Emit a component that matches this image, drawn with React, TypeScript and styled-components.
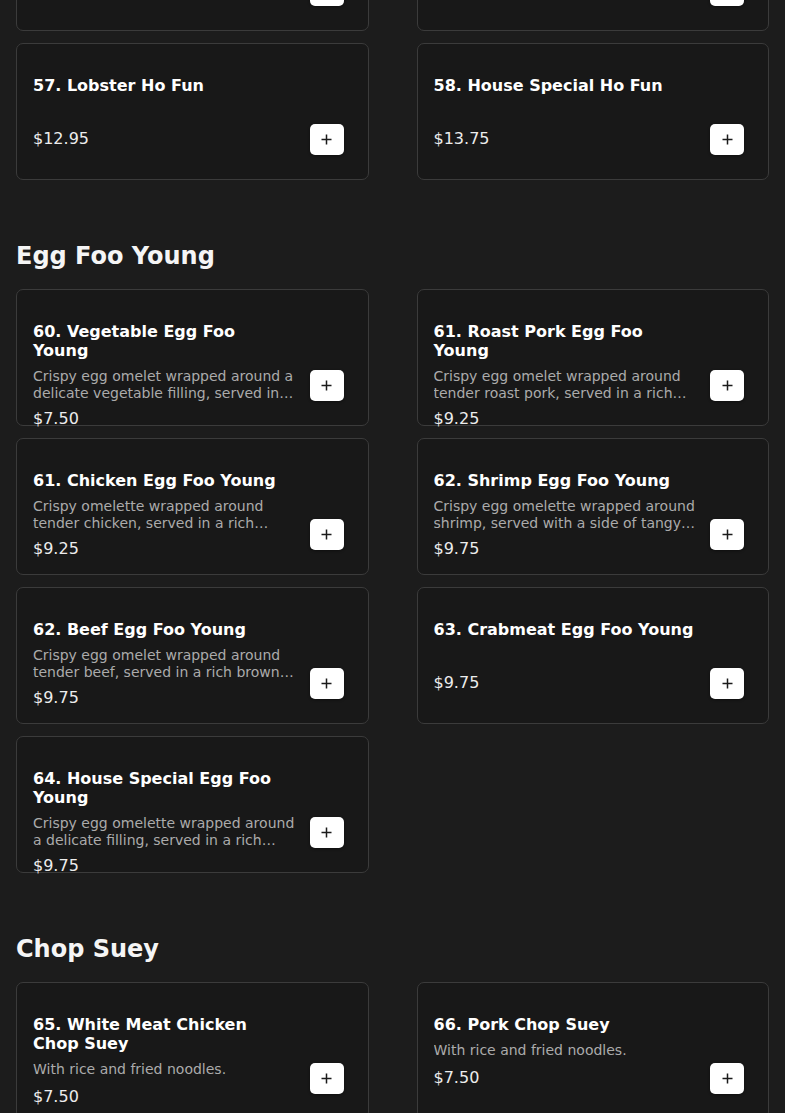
import React from "react";
import styled, { createGlobalStyle } from "styled-components";

const GlobalStyle = createGlobalStyle`
  html, body {
    margin: 0;
    padding: 0;
    background: #1c1c1c;
  }
  body {
    font-family: "DejaVu Sans", "Liberation Sans", sans-serif;
    color: #ffffff;
  }
`;

const Viewport = styled.div`
  height: 1113px;
  overflow: hidden;
`;

// the page is shown scrolled part way down the menu
const Scroller = styled.div`
  margin-top: -106px;
  padding: 0 16px 40px;
`;

const Section = styled.section`
  & + & {
    margin-top: 60px;
  }
`;

const SectionTitle = styled.h2`
  margin: 0 0 17px;
  font-size: 24px;
  line-height: 32px;
  font-weight: 700;
  color: #f5f5f5;
`;

const Grid = styled.div`
  display: grid;
  grid-template-columns: 1fr 1fr;
  column-gap: 48px;
  row-gap: 12px;
`;

const Card = styled.div`
  height: 137px;
  box-sizing: border-box;
  display: flex;
  align-items: flex-start;
  gap: 14px;
  padding: 0 24px 0 16px;
  background: #181818;
  border: 1px solid #3b3b3b;
  border-radius: 7px;
`;

const Info = styled.div`
  flex: 1;
  min-width: 0;
  padding-top: 32px;
`;

const ItemName = styled.h3`
  margin: 0;
  font-size: 16px;
  line-height: 19px;
  font-weight: 700;
  color: #ffffff;
`;

const Desc = styled.p`
  margin: 8px 0 0;
  min-height: 19px;
  font-size: 14px;
  line-height: 17px;
  color: #ababab;
  display: -webkit-box;
  -webkit-line-clamp: 2;
  -webkit-box-orient: vertical;
  overflow: hidden;
`;

const Price = styled.div`
  margin-top: 7px;
  font-size: 16px;
  line-height: 19px;
  color: #ececec;
`;

const AddButton = styled.button`
  flex: none;
  margin-top: 80px;
  width: 34px;
  height: 31px;
  display: flex;
  align-items: center;
  justify-content: center;
  padding: 0;
  border: none;
  border-radius: 5px;
  background: #ffffff;
  box-shadow: 0 1px 3px rgba(0, 0, 0, 0.4);
  cursor: pointer;
`;

const PlusIcon = () => (
  <svg width="11" height="11" viewBox="0 0 11 11">
    <path d="M5.5 0.5v10M0.5 5.5h10" stroke="#1b1b1b" strokeWidth="1.5" />
  </svg>
);

type Item = { name: string; desc?: string; price: string };

const sections: { title?: string; items: Item[] }[] = [
  {
    items: [
      { name: "55. Shrimp Ho Fun", price: "$12.50" },
      { name: "56. Beef Ho Fun", price: "$12.50" },
      { name: "57. Lobster Ho Fun", price: "$12.95" },
      { name: "58. House Special Ho Fun", price: "$13.75" },
    ],
  },
  {
    title: "Egg Foo Young",
    items: [
      {
        name: "60. Vegetable Egg Foo Young",
        desc: "Crispy egg omelet wrapped around a delicate vegetable filling, served in a rich brown gravy.",
        price: "$7.50",
      },
      {
        name: "61. Roast Pork Egg Foo Young",
        desc: "Crispy egg omelet wrapped around tender roast pork, served in a rich brown gravy.",
        price: "$9.25",
      },
      {
        name: "61. Chicken Egg Foo Young",
        desc: "Crispy omelette wrapped around tender chicken, served in a rich brown gravy.",
        price: "$9.25",
      },
      {
        name: "62. Shrimp Egg Foo Young",
        desc: "Crispy egg omelette wrapped around shrimp, served with a side of tangy brown gravy.",
        price: "$9.75",
      },
      {
        name: "62. Beef Egg Foo Young",
        desc: "Crispy egg omelet wrapped around tender beef, served in a rich brown gravy.",
        price: "$9.75",
      },
      { name: "63. Crabmeat Egg Foo Young", price: "$9.75" },
      {
        name: "64. House Special Egg Foo Young",
        desc: "Crispy egg omelette wrapped around a delicate filling, served in a rich brown gravy.",
        price: "$9.75",
      },
    ],
  },
  {
    title: "Chop Suey",
    items: [
      { name: "65. White Meat Chicken Chop Suey", desc: "With rice and fried noodles.", price: "$7.50" },
      { name: "66. Pork Chop Suey", desc: "With rice and fried noodles.", price: "$7.50" },
      { name: "67. Shrimp Chop Suey", desc: "With rice and fried noodles.", price: "$8.25" },
      { name: "68. Beef Chop Suey", desc: "With rice and fried noodles.", price: "$8.25" },
    ],
  },
];

const MenuCard = ({ item }: { item: Item }) => (
  <Card>
    <Info>
      <ItemName>{item.name}</ItemName>
      <Desc>{item.desc}</Desc>
      <Price>{item.price}</Price>
    </Info>
    <AddButton aria-label={`Add ${item.name}`}>
      <PlusIcon />
    </AddButton>
  </Card>
);

export default function App() {
  return (
    <>
      <GlobalStyle />
      <Viewport>
        <Scroller>
          {sections.map((s, i) => (
            <Section key={i}>
              {s.title && <SectionTitle>{s.title}</SectionTitle>}
              <Grid>
                {s.items.map((item) => (
                  <MenuCard key={item.name} item={item} />
                ))}
              </Grid>
            </Section>
          ))}
        </Scroller>
      </Viewport>
    </>
  );
}
